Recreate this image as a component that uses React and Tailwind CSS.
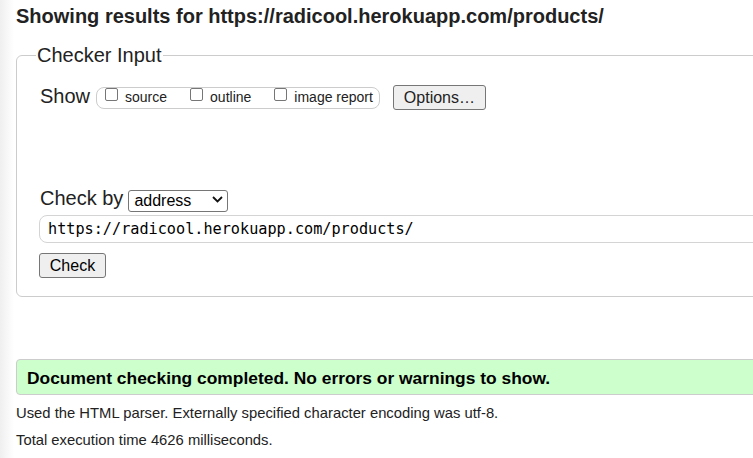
import { useState } from "react";

// Options for the "Check by" select
const CHECK_BY = ["address", "file upload", "text input"];

// Checkbox labels in the "Show" group
const SHOW_OPTIONS = ["source", "outline", "image report"];

function Chevron() {
  return (
    <svg
      width="11"
      height="7"
      viewBox="0 0 11 7"
      className="pointer-events-none absolute right-[5px] top-[7px]"
    >
      <path d="M1 1l4.5 4.5L10 1" fill="none" stroke="#111" strokeWidth="1.8" />
    </svg>
  );
}

export default function App() {
  const [checkBy, setCheckBy] = useState("address");
  const [shown, setShown] = useState({});
  const [url, setUrl] = useState("https://radicool.herokuapp.com/products/");

  return (
    <div className="w-[753px] h-[458px] overflow-hidden bg-[linear-gradient(to_right,#efefef,#ffffff_14px)] font-['Liberation_Sans',Arial,sans-serif] text-[#222]">
      <div className="pl-4 pt-[5px]">
        <h2 className="text-[20px] leading-[23px] font-bold whitespace-nowrap">
          Showing results for https://radicool.herokuapp.com/products/
        </h2>

        {/* Checker input */}
        <fieldset className="mt-4 w-[900px] border border-[#cccccc] rounded-[6px] pl-[19px] pb-[18px]">
          <legend className="px-[1px] text-[20px] leading-[23px]">Checker Input</legend>

          <div className="mt-[18px] ml-[4px] flex items-start">
            <span className="text-[20px] leading-[23px]">Show</span>
            <div className="ml-[6px] mt-[2px] flex items-start h-[22px] border border-[#cccccc] rounded-[8px] pl-[8px] pr-[6px]">
              {SHOW_OPTIONS.map((label, i) => (
                <label key={label} className={`flex items-start ${i > 0 ? "ml-[23px]" : ""}`}>
                  <input
                    type="checkbox"
                    checked={!!shown[label]}
                    onChange={(e) => setShown({ ...shown, [label]: e.target.checked })}
                    className="appearance-none w-[13px] h-[13px] border border-[#767676] rounded-[2px] bg-white"
                  />
                  <span className="ml-[7px] mt-[1px] text-[14px] leading-[16px]">{label}</span>
                </label>
              ))}
            </div>
            <button className="ml-[13px] w-[93px] h-[25px] bg-[#efefef] border border-[#767676] rounded-[3px] text-[16px] leading-[18px]">
              Options…
            </button>
          </div>

          <div className="mt-[77px] ml-[4px] flex items-start">
            <span className="text-[20px] leading-[23px]">Check by</span>
            <div className="relative ml-[5px] mt-[2px]">
              <select
                value={checkBy}
                onChange={(e) => setCheckBy(e.target.value)}
                className="appearance-none w-[100px] h-[22px] border border-[#767676] rounded-[3px] bg-white pl-[5px] text-[16px] leading-[18px] text-black"
              >
                {CHECK_BY.map((v) => (
                  <option key={v} value={v}>
                    {v}
                  </option>
                ))}
              </select>
              <Chevron />
            </div>
          </div>

          <input
            value={url}
            onChange={(e) => setUrl(e.target.value)}
            className="block mt-[2px] ml-[3px] w-[860px] h-[28px] border border-[#d4d4d4] rounded-[8px] pl-[8px] font-['DejaVu_Sans_Mono',monospace] text-[15.2px] text-black outline-none"
          />

          <button className="block mt-[10px] ml-[3px] w-[67px] h-[25px] bg-[#efefef] border border-[#767676] rounded-[3px] text-[16px] leading-[18px] text-black">
            Check
          </button>
        </fieldset>

        {/* Result */}
        <div className="mt-[62px] w-[900px] h-[36px] border border-[#cccccc] rounded-[4px] bg-[#ccffcc] pl-[10px] pt-[8px]">
          <p className="text-[17.4px] leading-[20px] font-bold text-black">
            Document checking completed. No errors or warnings to show.
          </p>
        </div>

        <p className="mt-[8px] text-[14.8px] leading-[20px]">
          Used the HTML parser. Externally specified character encoding was utf-8.
        </p>
        <p className="mt-[7px] text-[14.8px] leading-[20px]">Total execution time 4626 milliseconds.</p>
      </div>
    </div>
  );
}
